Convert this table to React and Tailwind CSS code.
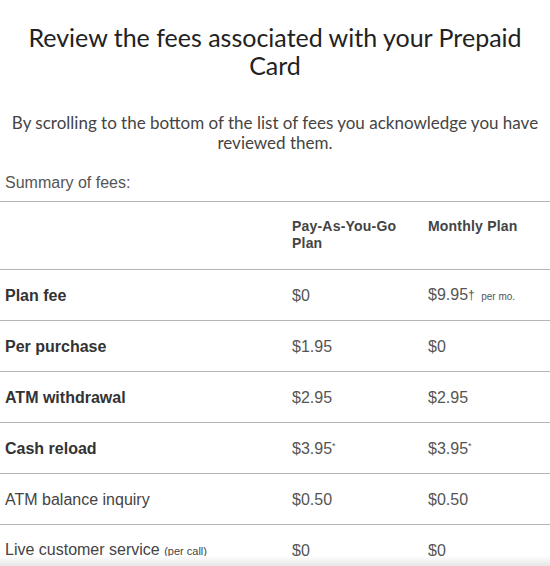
export default function App() {
  const rows = [
    { label: "Plan fee", bold: true, a: "$0", b: <>$9.95<sup className="text-[12px] relative top-[-1px]">†</sup> <span className="text-[10px] ml-[2px]">per mo.</span></> },
    { label: "Per purchase", bold: true, a: "$1.95", b: "$0" },
    { label: "ATM withdrawal", bold: true, a: "$2.95", b: "$2.95" },
    { label: "Cash reload", bold: true, a: <>$3.95<sup className="text-[9px]">*</sup></>, b: <>$3.95<sup className="text-[9px]">*</sup></> },
    { label: "ATM balance inquiry", bold: false, a: "$0.50", b: "$0.50" },
    { label: <>Live customer service <span className="text-[11px]">(per call)</span></>, bold: false, a: "$0", b: "$0", last: true },
  ];
  return (
    <div className="relative w-[550px] h-[566px] overflow-hidden bg-white">
      <div className="pt-[23px] text-center font-['Lato',sans-serif] text-[25px] leading-[28px] text-[#222] px-[20px]">
        Review the fees associated with your Prepaid Card
      </div>
      <div className="mt-[34px] text-center font-['Lato',sans-serif] text-[17px] leading-[20px] text-[#444] px-[6px]">
        By scrolling to the bottom of the list of fees you acknowledge you have reviewed them.
      </div>
      <div className="mt-[20px] pl-[5px] font-['Liberation_Sans',Arial,sans-serif] text-[16px] leading-[19px] text-[#555]">
        Summary of fees:
      </div>
      <div className="mt-[9px] border-t border-[#b5b5b5] font-['Liberation_Sans',Arial,sans-serif]">
        <div className="grid grid-cols-[292px_136px_1fr] h-[68px] border-b border-[#b5b5b5] pt-[16px] text-[14px] leading-[17px] tracking-[0.2px] font-bold text-[#444]">
          <div></div>
          <div className="pr-[20px]">Pay-As-You-Go Plan</div>
          <div>Monthly Plan</div>
        </div>
        {rows.map((r, i) => (
          <div key={i} className={`grid grid-cols-[292px_136px_1fr] h-[51px] items-center ${r.last ? "" : "border-b border-[#b5b5b5]"} text-[16px] leading-[19px]`}>
            <div className={`pl-[5px] ${r.bold ? "font-bold text-[#333]" : "text-[#444]"}`}>{r.label}</div>
            <div className="text-[#555]">{r.a}</div>
            <div className="text-[#555]">{r.b}</div>
          </div>
        ))}
      </div>
      <div className="absolute left-0 right-0 bottom-0 h-[10px] bg-gradient-to-b from-white to-[#e6e6e6]"></div>
    </div>
  );
}
